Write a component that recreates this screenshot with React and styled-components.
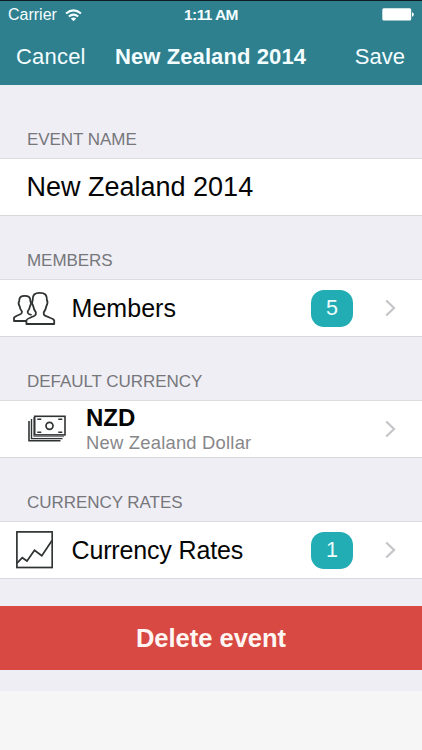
import React from "react";
import styled, { createGlobalStyle } from "styled-components";

const GlobalStyle = createGlobalStyle`
  * { box-sizing: border-box; }
  body {
    margin: 0;
    background: #f6f6f6;
    font-family: "Liberation Sans", Arial, sans-serif;
    -webkit-font-smoothing: antialiased;
  }
`;

const Screen = styled.div`
  width: 422px;
  height: 750px;
  display: flex;
  flex-direction: column;
  overflow: hidden;
  background: #f6f6f6;
`;

const Header = styled.header`
  height: 85px;
  flex: none;
  background: #2e808f;
  border-top: 1px solid #101c20;
  color: #f4fdff;
`;

const StatusBar = styled.div`
  height: 28px;
  display: grid;
  grid-template-columns: 1fr auto 1fr;
  align-items: center;
  padding: 0 8px;
  font-size: 16px;
`;

const Carrier = styled.div`
  display: flex;
  align-items: center;
  gap: 8px;
`;

const Clock = styled.div`
  font-weight: 700;
  font-size: 15.5px;
  letter-spacing: -0.6px;
`;

const BatterySlot = styled.div`
  display: flex;
  justify-content: flex-end;
  padding-bottom: 1px;
`;

const NavBar = styled.nav`
  height: 56px;
  display: grid;
  grid-template-columns: 1fr auto 1fr;
  align-items: center;
  padding: 0 17px 0 16px;
`;

const NavButton = styled.button`
  appearance: none;
  border: 0;
  padding: 0;
  background: none;
  color: inherit;
  font: 400 22px "Liberation Sans", Arial, sans-serif;
  letter-spacing: ${({ $end }) => ($end ? 0 : 0.2)}px;
  text-align: ${({ $end }) => ($end ? "right" : "left")};
`;

const Title = styled.h1`
  margin: 0;
  font-size: 22px;
  font-weight: 700;
  letter-spacing: 0.1px;
`;

const Content = styled.main`
  height: 606px;
  flex: none;
  background: #efeef4;
`;

const SectionTitle = styled.h2`
  margin: 0;
  height: ${({ $height }) => $height}px;
  padding: 0 27px 8px;
  display: flex;
  align-items: flex-end;
  color: #76767b;
  font-size: 17px;
  line-height: 20px;
  font-weight: 400;
  letter-spacing: -0.05px;
`;

const Row = styled.div`
  height: 58px;
  display: flex;
  align-items: center;
  background: #fff;
  border-top: 1px solid #dddce1;
  border-bottom: 1px solid #d8d7dc;
  padding: 0 26px 0 ${({ $inset }) => $inset || 0}px;
`;

const IconSlot = styled.div`
  width: ${({ $width }) => $width}px;
  padding-left: ${({ $left }) => $left}px;
  padding-bottom: ${({ $lift }) => $lift || 0}px;
  flex: none;
  display: flex;
`;

const Label = styled.div`
  flex: 1;
  font-size: ${({ $size }) => $size}px;
  line-height: 30px;
  color: #050505;
  letter-spacing: ${({ $tracking }) => $tracking || 0}px;
  padding-bottom: ${({ $lift }) => $lift || 0}px;
`;

const Currency = styled.div`
  flex: 1;
  padding-top: 2px;
`;

const Code = styled.div`
  font-size: 24px;
  line-height: 26px;
  font-weight: 700;
  color: #050505;
`;

const CurrencyName = styled.div`
  font-size: 18.4px;
  line-height: 24px;
  letter-spacing: 0.22px;
  color: #87878a;
`;

const Badge = styled.div`
  width: 42px;
  height: 37px;
  margin-right: 32px;
  border-radius: 13px;
  background: #22adb5;
  color: #effcfc;
  display: flex;
  align-items: center;
  justify-content: center;
  font-size: 21.5px;
`;

const DeleteButton = styled.button`
  appearance: none;
  display: block;
  width: 100%;
  height: 64px;
  margin-top: 27px;
  padding: 0;
  border: 0;
  background: #d74942;
  color: #fff6f3;
  font: 700 25.5px "Liberation Sans", Arial, sans-serif;
`;

const WifiIcon = () => (
  <svg width="17" height="13" viewBox="0 0 17 13" fill="none">
    <g stroke="#f4fdff" strokeWidth="2">
      <path d="M1 4.5Q8.5-1.8 16 4.5" />
      <path d="M3.8 7.6Q8.5 3.6 13.2 7.6" />
    </g>
    <path d="M5.8 9.5Q8.5 7.4 11.2 9.5L8.5 12.2Z" fill="#f4fdff" />
  </svg>
);

const BatteryIcon = () => (
  <svg width="32" height="13" viewBox="0 0 32 13" fill="#fff">
    <rect x="0.3" y="0.2" width="28.9" height="12.4" rx="1.5" />
    <path d="M30 4.3Q31.8 4.7 31.8 6.5T30 8.7Z" />
  </svg>
);

const MembersIcon = () => (
  <svg width="44" height="36" viewBox="0 0 44 36" fill="none" stroke="#303334" strokeWidth="1.8" strokeLinejoin="round">
    <path d="M14 31H2V27.8Q2.3 26.6 4.8 25.8L8.8 24Q10.3 23.2 9.9 21.4Q8 19.2 7.6 16.2C6.6 14.5 6.6 12 7.2 11.2C7.1 7.2 9 5.9 12.8 5.9S18.5 7.2 18.4 11.2C19 12 19 14.5 18 16.2Q17.6 19.2 15.7 21.4Q15.3 23.2 16.8 24L19.6 25" />
    <path fill="#fff" d="M14.4 34V30.5Q14.7 29 17.6 28L22.6 25.7Q24.3 24.7 23.9 22.4Q21.8 19.7 21.2 16C20 13.8 20.1 11 20.7 10C20.4 4.9 22.7 2.8 27.8 2.8S35.2 4.9 34.9 10C35.5 11 35.6 13.8 34.4 16Q33.8 19.7 31.7 22.4Q31.3 24.7 33 25.7L38.6 28Q41.9 29 42.2 30.5V34Z" />
  </svg>
);

const MoneyIcon = () => (
  <svg width="38" height="27" viewBox="0 0 38 27" fill="none" stroke="#303334">
    <path d="M1 6V25.8H32.5" strokeWidth="1.6" />
    <path d="M3.5 4V23.6H34.5" strokeWidth="1.4" />
    <path d="M5.7 2V21.6H36" stroke="#777" strokeWidth="1" />
    <rect x="6.7" y="1.3" width="30.3" height="18.6" fill="#fff" strokeWidth="1.6" />
    <circle cx="21.5" cy="10.8" r="3.5" strokeWidth="1.7" />
    <path d="M9.3 4.3H13.3M30.3 4.3H34.3M9.3 17.3H13.3M30.3 17.3H34.3" strokeWidth="1.4" />
  </svg>
);

const ChartIcon = () => (
  <svg width="37" height="38" viewBox="0 0 37 38" fill="none" stroke="#303334">
    <rect x="0.9" y="0.9" width="35.3" height="35.6" strokeWidth="1.7" />
    <path d="M1 32.2L6.3 26.7L11 30L18.5 19.2L25.8 24.7L36 9.6" strokeWidth="1.7" />
  </svg>
);

const Chevron = () => (
  <svg width="11" height="18" viewBox="0 0 11 18" fill="none">
    <path d="M1.2 1.5L9 9L1.2 16.5" stroke="#c6c6ca" strokeWidth="2.3" />
  </svg>
);

export default function App() {
  return (
    <>
      <GlobalStyle />
      <Screen>
        <Header>
          <StatusBar>
            <Carrier>Carrier <WifiIcon /></Carrier>
            <Clock>1:11 AM</Clock>
            <BatterySlot><BatteryIcon /></BatterySlot>
          </StatusBar>
          <NavBar>
            <NavButton>Cancel</NavButton>
            <Title>New Zealand 2014</Title>
            <NavButton $end>Save</NavButton>
          </NavBar>
        </Header>
        <Content>
          <SectionTitle $height={73}>EVENT NAME</SectionTitle>
          <Row $inset={26.5}>
            <Label $size={27} $lift={1}>New Zealand 2014</Label>
          </Row>
          <SectionTitle $height={63}>MEMBERS</SectionTitle>
          <Row>
            <IconSlot $width={71.5} $left={12}><MembersIcon /></IconSlot>
            <Label $size={25} $tracking={0.05}>Members</Label>
            <Badge>5</Badge>
            <Chevron />
          </Row>
          <SectionTitle $height={63}>DEFAULT CURRENCY</SectionTitle>
          <Row>
            <IconSlot $width={86} $left={28} $lift={2}><MoneyIcon /></IconSlot>
            <Currency>
              <Code>NZD</Code>
              <CurrencyName>New Zealand Dollar</CurrencyName>
            </Currency>
            <Chevron />
          </Row>
          <SectionTitle $height={63}>CURRENCY RATES</SectionTitle>
          <Row>
            <IconSlot $width={71.5} $left={16}><ChartIcon /></IconSlot>
            <Label $size={25} $tracking={-0.15}>Currency Rates</Label>
            <Badge>1</Badge>
            <Chevron />
          </Row>
          <DeleteButton>Delete event</DeleteButton>
        </Content>
      </Screen>
    </>
  );
}
